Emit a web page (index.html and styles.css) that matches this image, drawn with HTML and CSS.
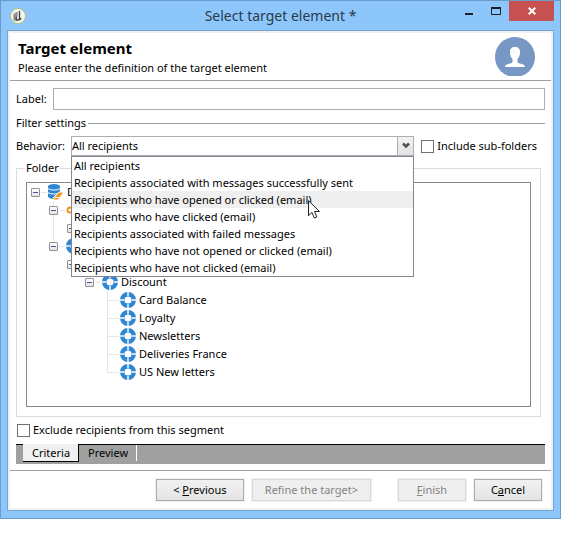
FILE: index.html
```html
<!DOCTYPE html>
<html lang="en">
<head>
<meta charset="utf-8">
<title>Select target element</title>
<link rel="stylesheet" href="styles.css">
</head>
<body>
<svg class="defs" aria-hidden="true">
  <symbol id="ring" viewBox="0 0 16 16">
    <circle cx="8" cy="8" r="5.800" fill="none" stroke="#2f86d2" stroke-width="4.400"/>
    <path d="M8 0v4M8 12v4M0 8h4M12 8h4" stroke="#c6def3" stroke-width="2"/>
  </symbol>
</svg>
<main class="window">
  <header class="titlebar">
    <svg class="app-icon" viewBox="0 0 18 18" aria-hidden="true">
      <circle cx="9" cy="9" r="7.6" fill="#f4f5f1" stroke="#a9c774"/>
      <path d="M4 13V8q1-3 4-3v9q-2 1-4-1z" fill="#b0b0ac"/>
      <path d="M6 13V7M8 5v5" stroke="#77776f" fill="none"/>
      <path d="M10.500 4v8M7.500 10q-1 3 1 3 3 0 3.500-2" stroke="#3c3c38" stroke-width="1.300" fill="none"/>
    </svg>
    <h1 class="caption">Select target element *</h1>
    <div class="controls">
      <button class="control" aria-label="Minimize"><svg width="10" height="10" viewBox="0 0 10 10"><path d="M1 8h8" stroke="#1f1f1f" stroke-width="2"/></svg></button>
      <button class="control" aria-label="Maximize"><svg width="10" height="8" viewBox="0 0 10 8"><path d="M.5 1v6.500h9V1" stroke="#1f1f1f" fill="none"/><path d="M0 1h10" stroke="#1f1f1f" stroke-width="2"/></svg></button>
      <button class="control close" aria-label="Close"><svg width="8" height="8" viewBox="0 0 8 8"><path d="M.7.7l6.600 6.600M7.300.7L.7 7.300" stroke="#fff" stroke-width="2"/></svg></button>
    </div>
  </header>
  <div class="client">
    <section class="banner">
      <div>
        <h2 class="heading">Target element</h2>
        <p class="intro">Please enter the definition of the target element</p>
      </div>
      <svg class="avatar" viewBox="0 0 40 39" aria-hidden="true">
        <circle cx="20" cy="20" r="20" fill="#7797c4"/>
        <path d="M20 10c-3.500 0-5 2-5 5 0 3 .7 5 2.500 7v2.500c0 1.500-2 2-4 2.500-2.500.7-3.500 1.300-3.500 3h20c0-1.700-1-2.300-3.500-3-2-.5-4-1-4-2.500V22c1.800-2 2.500-4 2.500-7 0-3-1.500-5-5-5z" fill="#fff"/>
      </svg>
    </section>
    <form class="form">
      <div class="row">
        <label for="label">Label:</label>
        <input class="text" id="label" type="text">
      </div>
      <div class="divider">Filter settings</div>
      <div class="row behavior">
        <label for="behavior">Behavior:</label>
        <div class="combo">
          <select class="select" id="behavior"><option>All recipients</option></select>
          <span class="arrow" aria-hidden="true"><svg width="8" height="8" viewBox="0 0 8 8"><path d="M1 1.500l3 3 3-3" fill="none" stroke="#505050" stroke-width="2.500"/></svg></span>
          <ul class="menu">
            <li>All recipients</li>
            <li>Recipients associated with messages successfully sent</li>
            <li class="hover">Recipients who have opened or clicked (email)
              <svg class="pointer" width="12" height="19" viewBox="0 0 12 19" aria-hidden="true"><path d="M.5.7v15l3.500-3.200 2.300 5.500 2.500-1-2.300-5.500h5z" fill="#fff" stroke="#222"/></svg>
            </li>
            <li>Recipients who have clicked (email)</li>
            <li>Recipients associated with failed messages</li>
            <li>Recipients who have not opened or clicked (email)</li>
            <li>Recipients who have not clicked (email)</li>
          </ul>
        </div>
        <label class="check"><input type="checkbox">Include sub-folders</label>
      </div>
      <fieldset class="folder">
        <legend>Folder</legend>
        <div class="tree">
          <ul>
            <li><div class="node"><i class="toggle"></i><svg class="icon" viewBox="0 0 16 16"><path d="M0 2v10c0 2 3 3 6 3s6-1 6-3V2z" fill="#2f86d2"/><ellipse cx="6" cy="2.500" rx="6" ry="2.500" fill="#2f86d2"/><path d="M0 4.500c2 2 10 2 12 0M0 8.500c2 2 10 2 12 0" stroke="#fff" fill="none"/><path d="M6 13l5-5h5l-4 5.500q-1 2.500-3 2.500H6q-2-.5 0-3z" fill="#ed9a26" stroke="#fff"/><path d="M7 13.500h4" stroke="#fff"/></svg>D</div>
              <ul class="branch">
                <li><div class="node"><i class="toggle"></i><svg class="icon" viewBox="0 0 16 16"><circle cx="4" cy="8" r="2.500" stroke="#f09a10" stroke-width="2" fill="none"/></svg></div>
                  <ul><li><div class="node"><i class="toggle"></i></div></li></ul>
                </li>
                <li><div class="node"><i class="toggle"></i><svg class="icon"><use href="#ring"/></svg></div>
                  <ul>
                    <li><div class="node"><i class="toggle"></i></div>
                      <ul>
                        <li><div class="node"><i class="toggle"></i><svg class="icon"><use href="#ring"/></svg>Discount</div>
                          <ul class="leaves">
                            <li><div class="node"><svg class="icon"><use href="#ring"/></svg>Card Balance</div></li>
                            <li><div class="node"><svg class="icon"><use href="#ring"/></svg>Loyalty</div></li>
                            <li><div class="node"><svg class="icon"><use href="#ring"/></svg>Newsletters</div></li>
                            <li><div class="node"><svg class="icon"><use href="#ring"/></svg>Deliveries France</div></li>
                            <li><div class="node"><svg class="icon"><use href="#ring"/></svg>US New letters</div></li>
                          </ul>
                        </li>
                      </ul>
                    </li>
                  </ul>
                </li>
              </ul>
            </li>
          </ul>
        </div>
      </fieldset>
      <label class="check exclude"><input type="checkbox">Exclude recipients from this segment</label>
      <nav class="tabs">
        <button class="tab active" type="button">Criteria</button>
        <button class="tab" type="button">Preview</button>
      </nav>
    </form>
    <footer class="actions">
      <button class="button previous">&lt; <u>P</u>revious</button>
      <button class="button refine" disabled>Refine the target&gt;</button>
      <button class="button finish" disabled><u>F</u>inish</button>
      <button class="button"><span>C<u>a</u>ncel</span></button>
    </footer>
  </div>
</main>
</body>
</html>
```
FILE: styles.css
```css
* { box-sizing: border-box; }
body { margin: 0; padding-right: 18px; background: #fff; color: #000; font: 11px/16px "Noto Sans", sans-serif; }
h1, h2, p, ul { margin: 0; padding: 0; }
ul { list-style: none; }
button, input, select { font: inherit; color: inherit; margin: 0; }
svg { display: block; }
.defs { position: absolute; width: 0; height: 0; }

.window { background: #8dc6fa; border: 1px solid #6c9bc8; padding: 0 6px 7px; }
.titlebar { display: grid; grid-template-columns: 1fr auto 1fr; height: 29px; align-items: center; }
.app-icon { width: 18px; height: 18px; margin-left: 2px; }
.caption { font-size: 14px; line-height: 20px; font-weight: 400; color: #2b3b4b; }
.controls { display: flex; justify-content: flex-end; align-self: start; }
.control { display: grid; place-items: center; width: 27px; height: 20px; padding: 0; border: 0; background: none; }
.close { width: 45px; background: #c75050; }

.client { border: 1px solid #76a5d2; background: #fff; box-shadow: inset 0 0 0 2px #f0f0f0; padding: 2px; }
.banner { display: flex; justify-content: space-between; padding: 4px 16px 3px 8px; border-bottom: 1px solid #a0a0a0; }
.heading { font-size: 15px; line-height: 22px; font-weight: 700; }
.intro { line-height: 18px; }
.avatar { width: 40px; height: 39px; }

.form { padding: 7px 6px 6px; }
.row { display: flex; align-items: center; gap: 6px; }
.text { flex: 1; min-width: 0; height: 22px; border: 1px solid #abadb3; background: #fff; padding: 0 4px; }
.divider { display: flex; align-items: center; gap: 2px; height: 26px; }
.divider::after { content: ""; flex: 1; height: 1px; background: #a0a0a0; }
.behavior { gap: 6px; }
.combo { position: relative; flex: 1; height: 20px; }
.select { display: block; width: 100%; height: 20px; appearance: none; border: 1px solid #abadb3; border-radius: 0; background: #fff; padding: 0; }
.arrow { position: absolute; top: 0; right: 0; width: 17px; height: 20px; display: grid; place-items: center; border: 1px solid #abadb3; background: linear-gradient(#f2f2f2, #e2e2e2); pointer-events: none; }
.menu { position: absolute; z-index: 2; top: 20px; left: 0; right: 0; border: 1px solid #82868e; background: #fff; }
.menu li { position: relative; line-height: 17px; padding-left: 2px; white-space: nowrap; }
.menu .hover { background: #efefef; }
.pointer { position: absolute; top: 9px; left: 236px; z-index: 3; }
.check { display: flex; align-items: center; gap: 3px; }
.check input { appearance: none; width: 13px; height: 13px; border: 1px solid #707070; background: #fff; }
.behavior .check { padding: 0 8px 0 1px; }

.folder { min-width: 0; margin: 4px 4px 0 0; border: 1px solid #dcdcdc; padding: 6px 9px 9px; }
.folder legend { padding: 0 1px; margin-left: -1px; }
.tree { border: 1px solid #82868e; padding-bottom: 25px; }
.tree ul { padding-left: 18px; }
.tree > ul { padding-left: 4px; }
.tree .leaves { position: relative; padding-left: 31px; }
.leaves::before { content: ""; position: absolute; left: 22px; top: 0; bottom: 9px; width: 1px; background: #e6e6e6; }
.leaves .node::before { content: ""; width: 12px; height: 1px; margin: 0 -2px 0 -9px; background: #e6e6e6; }
.branch { position: relative; }
.branch::before { content: ""; position: absolute; left: 22px; top: 0; height: 45px; width: 1px; background: #e6e6e6; }
.node { display: flex; align-items: center; gap: 3px; height: 18px; }
.toggle { position: relative; display: grid; place-items: center; width: 9px; height: 9px; margin-right: 5px; border: 1px solid #929292; border-radius: 1px; background: linear-gradient(#fff, #e4e4e4); }
.toggle::before { content: ""; width: 5px; height: 1px; background: #4058a0; }
.toggle::after { content: ""; position: absolute; left: 9px; top: 3px; width: 6px; height: 1px; background: #e6e6e6; }
.icon { flex: none; width: 16px; height: 16px; }

.exclude { padding: 5px 0 6px 1px; }
.tabs { display: flex; align-items: flex-start; height: 20px; padding-left: 7px; border-top: 1px solid #000; background: #a0a0a0; }
.tab { height: 16px; border: 0; border-right: 1px solid #fff; padding: 0 8px 0 9px; background: none; line-height: 16px; }
.tab.active { border: solid #000; border-width: 0 1px 1px 0; background: #f0f0f0; height: 18px; margin-top: -1px; }

.actions { display: flex; justify-content: flex-end; gap: 8px; padding: 8px 9px 7px 8px; border-top: 1px solid #a0a0a0; }
.button { min-width: 68px; height: 22px; border: 1px solid #acacac; padding: 0 12px; background: linear-gradient(#f1f1f1, #e4e4e4); box-shadow: 0 0 0 1px #f0f0f0; line-height: 18px; white-space: nowrap; }
.button:disabled { border-color: #d9d9d9; background: #efefef; color: #838383; }
.previous { min-width: 88px; }
.refine { min-width: 119px; }
.finish { margin-left: 19px; }
```
